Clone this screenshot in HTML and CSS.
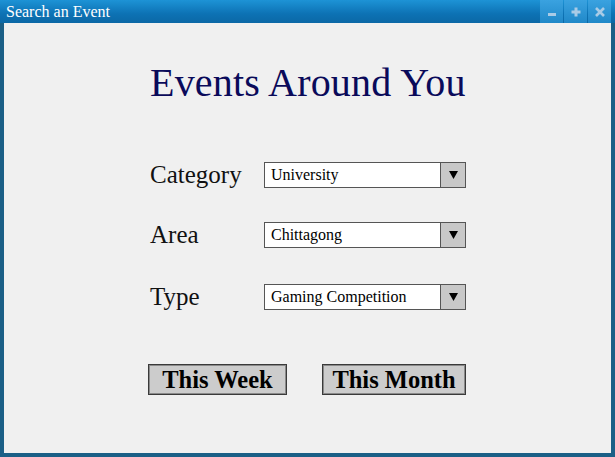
FILE: index.html
```html
<!DOCTYPE html>
<html>
<head>
<meta charset="utf-8">
<link rel="stylesheet" href="styles.css">
</head>
<body>
<div class="window">
  <div class="titlebar">
    <span class="title">Search an Event</span>
    <div class="controls">
      <div class="ctl"><svg width="10" height="10" viewBox="0 0 10 10"><rect x="1" y="6" width="8" height="3" fill="#a9cbe6"/></svg></div>
      <div class="ctl"><svg width="10" height="10" viewBox="0 0 10 10"><rect x="3.5" y="0.5" width="3" height="9" fill="#a9cbe6"/><rect x="0.5" y="3.5" width="9" height="3" fill="#a9cbe6"/></svg></div>
      <div class="ctl"><svg width="10" height="10" viewBox="0 0 10 10"><path d="M1 1 L9 9 M9 1 L1 9" stroke="#a9cbe6" stroke-width="2.6"/></svg></div>
    </div>
  </div>
  <div class="content">
    <h1 class="heading">Events Around You</h1>
    <div class="form">
      <div class="row">
        <span class="label">Category</span>
        <div class="select"><span class="value">University</span><span class="arrow"><svg width="9" height="8" viewBox="0 0 9 8"><path d="M0 0 H9 L4.5 8 Z" fill="#000"/></svg></span></div>
      </div>
      <div class="row">
        <span class="label">Area</span>
        <div class="select"><span class="value">Chittagong</span><span class="arrow"><svg width="9" height="8" viewBox="0 0 9 8"><path d="M0 0 H9 L4.5 8 Z" fill="#000"/></svg></span></div>
      </div>
      <div class="row">
        <span class="label">Type</span>
        <div class="select"><span class="value">Gaming Competition</span><span class="arrow"><svg width="9" height="8" viewBox="0 0 9 8"><path d="M0 0 H9 L4.5 8 Z" fill="#000"/></svg></span></div>
      </div>
    </div>
    <div class="buttons">
      <div class="btn week">This Week</div>
      <div class="btn month">This Month</div>
    </div>
  </div>
</div>
</body>
</html>
```
FILE: styles.css
```css
html, body {
  margin: 0;
  padding: 0;
  background: #1b5f86;
}
.window {
  width: 615px;
  height: 457px;
  box-sizing: border-box;
  background: #1b5f86;
  display: flex;
  flex-direction: column;
  padding: 0 4px 4px 4px;
}
.titlebar {
  height: 23px;
  margin: 0 -4px;
  padding-left: 6px;
  background: linear-gradient(#1d93d6, #0d72b4 60%, #0b68a6);
  display: flex;
  align-items: center;
  justify-content: space-between;
}
.title {
  color: #ffffff;
  font-family: "Liberation Serif", "DejaVu Serif", serif;
  font-size: 16px;
}
.controls {
  display: flex;
  height: 23px;
  margin-right: 4px;
}
.ctl {
  width: 23px;
  height: 23px;
  margin-left: 1px;
  background: linear-gradient(#3aa2e0, #2088c8);
  display: flex;
  align-items: center;
  justify-content: center;
}
.content {
  flex: 1;
  background: #f0f0f0;
  padding-left: 144px;
}
.heading {
  margin: 38px 0 0 2px;
  font-family: "Liberation Serif", serif;
  font-weight: normal;
  font-size: 40px;
  letter-spacing: 0.2px;
  line-height: 44px;
  color: #0a0a5a;
}
.form {
  margin-top: 56px;
  display: flex;
  flex-direction: column;
  gap: 32px;
}
.row {
  display: flex;
  align-items: center;
  height: 28px;
}
.row:nth-child(3) {
  margin-top: 2px;
}
.label {
  width: 114px;
  padding-left: 2px;
  font-family: "Liberation Serif", serif;
  font-size: 25px;
  color: #111;
}
.select {
  width: 202px;
  height: 26px;
  box-sizing: border-box;
  border: 1px solid #555;
  background: #fff;
  display: flex;
}
.value {
  flex: 1;
  padding-left: 6px;
  font-family: "Liberation Serif", serif;
  font-size: 16px;
  line-height: 24px;
  color: #000;
}
.arrow {
  width: 24px;
  border-left: 1px solid #555;
  background: #c8c8c8;
  display: flex;
  align-items: center;
  justify-content: center;
}
.buttons {
  margin-top: 53px;
  display: flex;
  gap: 35px;
}
.btn {
  height: 31px;
  box-sizing: border-box;
  border: 1px solid #3a3a3a;
  box-shadow: inset 0 0 0 1px #8a8a8a;
  background: #cccccc;
  font-family: "Liberation Serif", serif;
  font-weight: bold;
  font-size: 24.5px;
  line-height: 29px;
  text-align: center;
  color: #000;
}
.week { width: 139px; }
.month { width: 144px; }
```
